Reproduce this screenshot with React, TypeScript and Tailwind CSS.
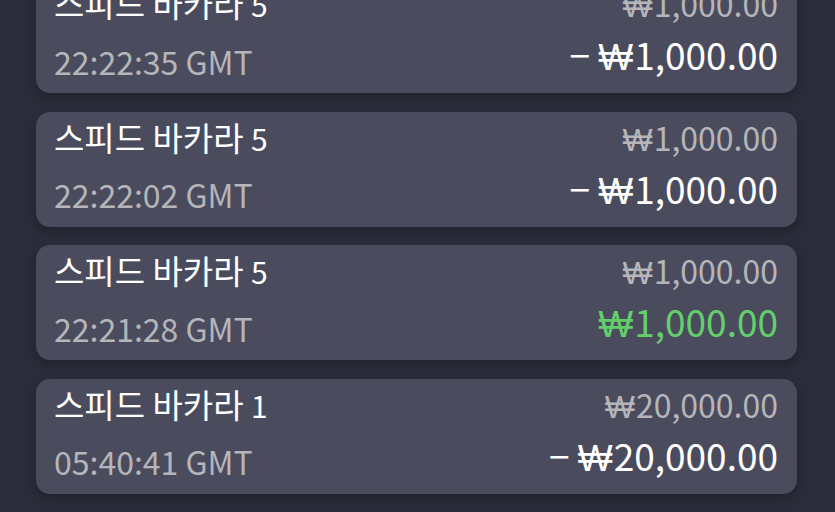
import React from "react";

type Row = { name: string; num: string; time: string; bet: string; result: string; neg: boolean; win?: boolean };

const rows: Row[] = [
  { name: "스피드 바카라", num: "5", time: "22:22:35 GMT", bet: "1,000.00", result: "1,000.00", neg: true },
  { name: "스피드 바카라", num: "5", time: "22:22:02 GMT", bet: "1,000.00", result: "1,000.00", neg: true },
  { name: "스피드 바카라", num: "5", time: "22:21:28 GMT", bet: "1,000.00", result: "1,000.00", neg: false, win: true },
  { name: "스피드 바카라", num: "1", time: "05:40:41 GMT", bet: "20,000.00", result: "20,000.00", neg: true },
  { name: "스피드 바카라", num: "1", time: "05:40:41 GMT", bet: "20,000.00", result: "20,000.00", neg: true },
];

function Won() {
  return (
    <span className="mr-[1px] font-extralight" style={{ fontFamily: '"DejaVu Sans", sans-serif' }}>
      ₩
    </span>
  );
}

export default function App() {
  return (
    <div
      className="h-[512px] w-[835px] overflow-hidden bg-[#2a2c3a]"
      style={{ fontFamily: '"Noto Sans CJK KR", "Noto Sans", sans-serif' }}
    >
      <div className="mt-[-22px] flex flex-col gap-[18.5px] pl-[36px] pr-[38px]">
        {rows.map((r, i) => (
          <div
            key={i}
            className="flex h-[115px] shrink-0 items-start justify-between rounded-[14px] bg-[#4a4c5e] pl-[18px] pr-[19px] pt-[9px] shadow-[0_4px_10px_rgba(0,0,0,0.25)]"
          >
            <div className="flex flex-col">
              <div className="h-[33px] whitespace-nowrap text-[33px] leading-none text-white">
                {r.name} <span className="text-[30px]">{r.num}</span>
              </div>
              <div className="mt-[24.5px] h-[32px] whitespace-nowrap text-[32px] leading-none text-[#b5b5ba]">
                {r.time}
              </div>
            </div>
            <div className="flex flex-col items-end">
              <div className="h-[32px] whitespace-nowrap text-[32px] leading-none text-[#b5b5ba]">
                <Won />
                {r.bet}
              </div>
              <div
                className={`mt-[17.4px] h-[37px] whitespace-nowrap text-[37px] leading-none ${
                  r.win ? "text-[#63cf6b]" : "text-white"
                }`}
              >
                {r.neg ? "− " : ""}
                <Won />
                {r.result}
              </div>
            </div>
          </div>
        ))}
      </div>
    </div>
  );
}
